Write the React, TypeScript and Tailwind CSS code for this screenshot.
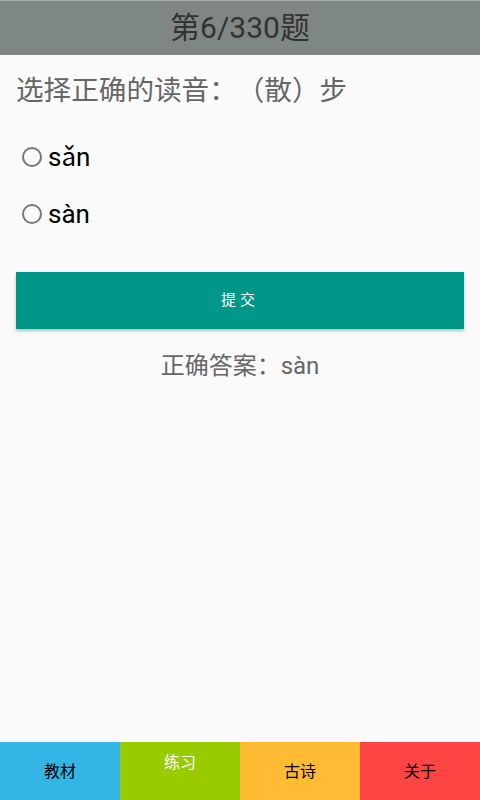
import React, { useState } from 'react';

const OPTIONS = ['sǎn', 'sàn'];

const TABS = [
  { label: '教材', bg: 'bg-[#33b5e5]', text: 'text-black', active: false },
  { label: '练习', bg: 'bg-[#99cc00]', text: 'text-white', active: true },
  { label: '古诗', bg: 'bg-[#ffbb33]', text: 'text-black', active: false },
  { label: '关于', bg: 'bg-[#ff4444]', text: 'text-black', active: false },
];

const font = "font-['Roboto','Noto_Sans_CJK_SC',sans-serif] [text-spacing-trim:space-all]";

export default function App() {
  const [picked, setPicked] = useState<number | null>(null);

  return (
    <div className={`w-[480px] h-[800px] flex flex-col bg-[#fafafa] ${font}`}>
      <header className="h-[55px] shrink-0 bg-[#7f8784] border-t border-[#a3a9a7] flex items-center justify-center">
        <h1 className="text-[30px] text-[#333] leading-none">第6/330题</h1>
      </header>

      <main className="flex-1 flex flex-col px-4">
        <p className="mt-[20px] text-[27.6px] leading-[32px] text-[#666]">选择正确的读音：（散）步</p>

        <div className="mt-[33px] flex flex-col gap-[23px]">
          {OPTIONS.map((opt, i) => (
            <label key={opt} className="flex items-center h-[34px] pl-[6px] cursor-pointer" onClick={() => setPicked(i)}>
              <span className="w-[20px] h-[20px] rounded-full border-2 border-[#777] flex items-center justify-center">
                {picked === i && <span className="w-[10px] h-[10px] rounded-full bg-[#009688]" />}
              </span>
              <span className="ml-[6px] text-[26px] text-black leading-none">{opt}</span>
            </label>
          ))}
        </div>

        <button className="mt-[41px] h-[57px] w-full bg-[#009688] text-white text-[15px] tracking-[4px] shadow-[0_2px_3px_rgba(0,0,0,0.25)]">
          提交
        </button>

        <p className="mt-[21px] text-center text-[24px] leading-[32px] text-[#666]">正确答案：sàn</p>
      </main>

      <nav className="h-[58px] shrink-0 grid grid-cols-4">
        {TABS.map((t) => (
          <div
            key={t.label}
            className={`${t.bg} ${t.text} flex justify-center text-[16px] ${t.active ? 'items-start pt-[9px]' : 'items-center pt-[2px]'}`}
          >
            {t.label}
          </div>
        ))}
      </nav>
    </div>
  );
}
